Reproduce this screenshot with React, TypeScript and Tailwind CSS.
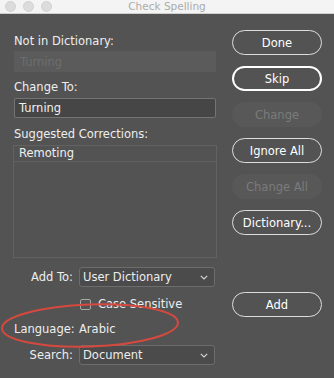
import React from "react";

const font = { fontFamily: '"DejaVu Sans", "Liberation Sans", sans-serif' };

function Chevron() {
  return (
    <svg width="8" height="5" viewBox="0 0 8 5" className="mr-[6px]">
      <path d="M0.8 0.8 L4 4 L7.2 0.8" fill="none" stroke="#d8d8d8" strokeWidth="1.1" />
    </svg>
  );
}

function Select({ value }: { value: string }) {
  return (
    <div className="w-[136px] h-[20px] flex items-center justify-between border border-[#6c6c6c] bg-[#4b4b4b] rounded-[3px] pl-[3px]">
      <span className="text-[11.5px] leading-[14px] text-[#ececec]">{value}</span>
      <Chevron />
    </div>
  );
}

function Btn({ label, variant = "normal", className = "" }: { label: string; variant?: "normal" | "default" | "disabled"; className?: string }) {
  const v =
    variant === "default"
      ? "border-2 border-white text-white"
      : variant === "disabled"
      ? "bg-[#585858] text-[#7b7b7b]"
      : "border border-[#dedede] text-white";
  return (
    <div className={`h-[25px] w-[90px] rounded-full flex items-center justify-center text-[11.5px] leading-[14px] ${v} ${className}`}>
      {label}
    </div>
  );
}

export default function App() {
  return (
    <div className="relative w-[334px] h-[378px] bg-[#535353] overflow-hidden" style={font}>
      {/* title bar */}
      <div className="relative h-[14px] bg-[#f4f4f4] border-b border-[#cfcfcf] flex items-center">
        <div className="absolute left-[5px] top-[1px] flex gap-[7px]">
          <div className="w-[11px] h-[11px] rounded-full bg-[#dcdcdc] border border-[#d2d2d2]" />
          <div className="w-[11px] h-[11px] rounded-full bg-[#dcdcdc] border border-[#d2d2d2]" />
          <div className="w-[11px] h-[11px] rounded-full bg-[#dcdcdc] border border-[#d2d2d2]" />
        </div>
        <div className="w-full text-center text-[10.5px] leading-[13px] text-[#ababab]">Check Spelling</div>
      </div>

      <div className="flex">
        {/* left column */}
        <div className="ml-[14px] w-[202px] flex flex-col">
          <div className="mt-[20px] h-[14px] text-[11.5px] leading-[14px] text-[#eeeeee]">Not in Dictionary:</div>
          <div className="mt-[3px] h-[21px] bg-[#5b5b5b] pl-[6px] flex items-center text-[11.5px] leading-[14px] text-[#6e6e6e]">Turning</div>
          <div className="mt-[8px] h-[14px] text-[11.5px] leading-[14px] text-[#eeeeee]">Change To:</div>
          <div className="mt-[4px] h-[20px] bg-[#464646] border border-[#737373] rounded-[2px] pl-[4px] flex items-center text-[11.5px] leading-[14px] text-[#f0f0f0]">Turning</div>
          <div className="mt-[9px] h-[14px] text-[11.5px] leading-[14px] text-[#eeeeee]">Suggested Corrections:</div>
          <div className="mt-[4px] -ml-[1px] w-[204px] h-[113px] border border-[#626262]">
            <div className="h-[16px] border-b border-[#606060] pl-[5px] text-[11.5px] leading-[15px] text-[#f0f0f0]">Remoting</div>
          </div>

          <div className="mt-[9px] h-[20px] flex items-center">
            <div className="w-[59px] text-right text-[11.5px] leading-[14px] text-[#eeeeee]">Add To:</div>
            <div className="ml-[6px]"><Select value="User Dictionary" /></div>
          </div>
          <div className="mt-[10px] h-[14px] flex items-center">
            <div className="ml-[66px] w-[11px] h-[11px] border border-[#a8a8a8] rounded-[2px]" />
            <div className="ml-[7px] text-[11.5px] leading-[14px] text-[#eeeeee]">Case Sensitive</div>
          </div>
          <div className="mt-[11px] h-[14px] flex items-center">
            <div className="w-[59px] text-right text-[11.5px] leading-[14px] text-[#eeeeee]">Language:</div>
            <div className="ml-[6px] text-[11.5px] leading-[14px] text-[#eeeeee]">Arabic</div>
          </div>
          <div className="mt-[9px] h-[20px] flex items-center">
            <div className="w-[59px] text-right text-[11.5px] leading-[14px] text-[#eeeeee]">Search:</div>
            <div className="ml-[6px]"><Select value="Document" /></div>
          </div>
        </div>

        {/* right column */}
        <div className="ml-[16px] w-[90px] flex flex-col">
          <Btn label="Done" className="mt-[16px]" />
          <Btn label="Skip" variant="default" className="mt-[11px]" />
          <Btn label="Change" variant="disabled" className="mt-[11px]" />
          <Btn label="Ignore All" className="mt-[11px]" />
          <Btn label="Change All" variant="disabled" className="mt-[11px]" />
          <Btn label="Dictionary..." className="mt-[11px]" />
          <Btn label="Add" className="mt-[57px]" />
        </div>
      </div>

      {/* red annotation ellipse */}
      <svg className="absolute left-0 top-0 pointer-events-none" width="334" height="378">
        <ellipse cx="90" cy="325.5" rx="88" ry="21" transform="rotate(-2 90 325.5)" fill="none" stroke="#d6493f" strokeWidth="2" />
      </svg>
    </div>
  );
}
